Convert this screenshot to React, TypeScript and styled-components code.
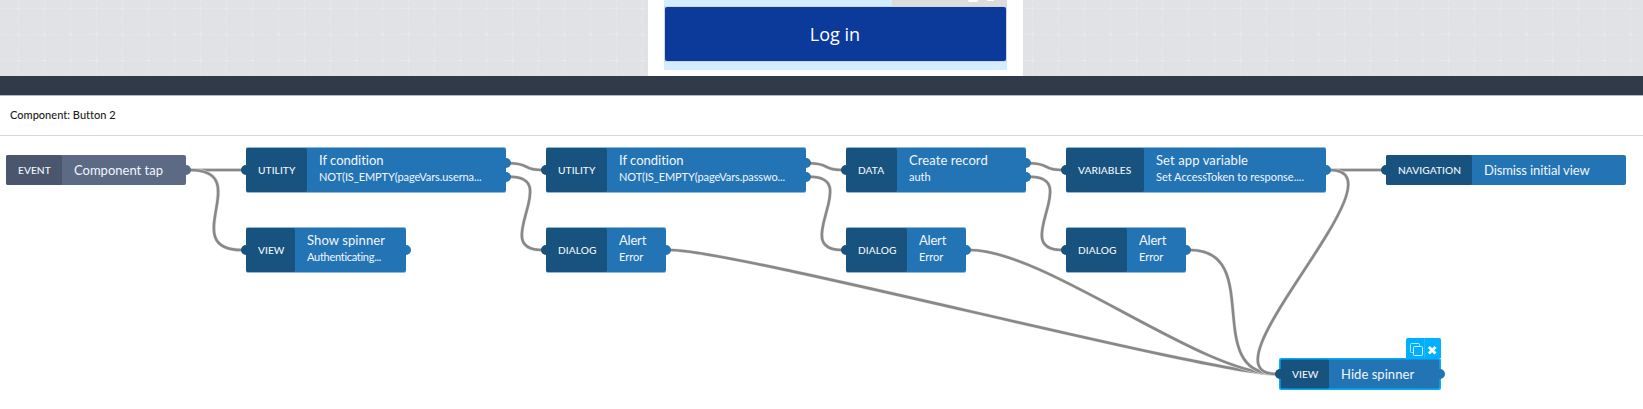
import React from 'react';
import styled, { createGlobalStyle } from 'styled-components';

const Global = createGlobalStyle`
  * { box-sizing: border-box; }
  body {
    margin: 0;
    background: #fff;
    font-family: Lato, "Liberation Sans", sans-serif;
    font-variant-ligatures: none;
  }
`;

const Page = styled.div`
  display: flex;
  flex-direction: column;
  width: 1643px;
  height: 409px;
  overflow: hidden;
`;

const Stage = styled.section`
  position: relative;
  display: flex;
  justify-content: center;
  flex: 0 0 76px;
  padding-left: 28px;
  background: #e0e2e6;
`;

const Grid = styled.svg`
  position: absolute;
  inset: 0;
`;

const Phone = styled.div`
  position: relative;
  display: flex;
  flex-direction: column;
  width: 375px;
  padding: 0 16px;
  background: #fff;
`;

const Hint = styled.div`
  display: flex;
  justify-content: flex-end;
  height: 6px;
  background: #d3edff;
`;

const HintLabel = styled.div`
  display: flex;
  gap: 9px;
  width: 115px;
  padding-left: 76px;
  background: #dcdcdc;
`;

const Descender = styled.span<{ $w: number; $h: number }>`
  width: ${p => p.$w}px;
  height: ${p => p.$h}px;
  border-radius: 0 0 3px 3px;
  background: #fff;
`;

const LoginFrame = styled.div`
  height: 56px;
  padding: 1px;
  background: #cfd6e0;
`;

const LoginButton = styled.button`
  display: block;
  width: 100%;
  height: 54px;
  padding: 0 1px 0 0;
  border: 0;
  border-radius: 2px;
  background: #0b3a9b;
  color: #fff;
  font: 18px/54px "Open Sans", sans-serif;
`;

const HintFoot = styled.div`
  height: 8px;
  background: #d3edff;
`;

const Divider = styled.div`
  flex: 0 0 20px;
  border-bottom: 1px solid #b7bbc2;
  background: #303a49;
`;

const Title = styled.header`
  flex: 0 0 40px;
  padding-left: 10px;
  border-bottom: 1px solid #d8d8d8;
  color: #1c1c1c;
  font: 500 11px/38px Lato, sans-serif;
  font-variant-ligatures: none;
  letter-spacing: 0.02px;
`;

const Canvas = styled.main`
  position: relative;
  flex: 1;
`;

const Wires = styled.svg`
  position: absolute;
  inset: 0;
`;

const NodeBox = styled.div<{ $x: number; $y: number; $w: number; $h: number; $event?: boolean; $tall?: boolean }>`
  position: absolute;
  left: ${p => p.$x}px;
  top: ${p => p.$y}px;
  width: ${p => p.$w}px;
  height: ${p => p.$h}px;
  display: flex;
  border-radius: 2px;
  background: ${p => (p.$event ? '#5c6a86' : '#2374b4')};
  color: #f2f6fb;
  box-shadow: ${p => (p.$tall ? '0 -1px 0 #8fb6d6, 0 1px 0 #8fb6d6' : 'none')};
`;

const Kind = styled.div<{ $w: number; $event?: boolean; $track: number }>`
  display: flex;
  align-items: center;
  flex: 0 0 ${p => p.$w}px;
  padding: 0 0 1px 12px;
  border-radius: 2px;
  background: ${p => (p.$event ? '#4a566d' : '#18527f')};
  font-size: 10.2px;
  font-weight: 500;
  letter-spacing: ${p => p.$track}px;
  white-space: nowrap;
`;

const Body = styled.div<{ $tall?: boolean }>`
  display: flex;
  flex-direction: column;
  justify-content: center;
  padding: 0 0 ${p => (p.$tall ? 4 : 0)}px 12px;
  white-space: nowrap;
`;

const Name = styled.div<{ $track: number }>`
  font-size: 13px;
  line-height: 17px;
  letter-spacing: ${p => p.$track}px;
`;

const Detail = styled.div<{ $track: number }>`
  font-size: 11px;
  line-height: 16px;
  letter-spacing: ${p => p.$track}px;
`;

const Selection = styled.div`
  position: absolute;
  inset: -1px;
  border-radius: 2px;
  box-shadow: inset 0 0 0 1.6px #00b0ff;
`;

const Port = styled.span<{ $side: 'in' | 'out'; $at: number; $color: string }>`
  position: absolute;
  ${p => (p.$side === 'in' ? 'left' : 'right')}: -5px;
  top: ${p => p.$at - 5}px;
  width: 10px;
  height: 10px;
  border-radius: 5px;
  background: ${p => p.$color};
`;

const Tools = styled.div`
  position: absolute;
  right: -1px;
  top: -21px;
  display: flex;
  width: 35px;
  height: 20px;
  border-radius: 2px 2px 0 0;
  background: #00b0ff;
`;

type NodeData = {
  kind: string; kw: number; name: string; detail?: string;
  x: number; y: number; w: number; event?: boolean; selected?: boolean;
  noIn?: boolean; outs: number[]; kt?: number; nt?: number; dt?: number;
};

/* y is the vertical middle of the node, relative to the canvas top */
const nodes: NodeData[] = [
  { kind: 'EVENT', kw: 56, name: 'Component tap', x: 6, y: 34, w: 180, event: true, noIn: true, outs: [0] },
  { kind: 'UTILITY', kw: 61, name: 'If condition', detail: 'NOT(IS_EMPTY(pageVars.userna...', x: 246, y: 34, w: 260, outs: [-6.7, 6.7], dt: -0.1 },
  { kind: 'VIEW', kw: 49, name: 'Show spinner', detail: 'Authenticating...', x: 246, y: 114, w: 160, outs: [0], nt: 0.1, dt: -0.28 },
  { kind: 'UTILITY', kw: 61, name: 'If condition', detail: 'NOT(IS_EMPTY(pageVars.passwo...', x: 546, y: 34, w: 260, outs: [-6.7, 6.7], dt: -0.1 },
  { kind: 'DIALOG', kw: 61, name: 'Alert', detail: 'Error', x: 546, y: 114, w: 120, outs: [0], nt: -0.2 },
  { kind: 'DATA', kw: 51, name: 'Create record', detail: 'auth', x: 846, y: 34, w: 180, outs: [-6.7, 6.7], nt: 0.08 },
  { kind: 'DIALOG', kw: 61, name: 'Alert', detail: 'Error', x: 846, y: 114, w: 120, outs: [0], nt: -0.2 },
  { kind: 'VARIABLES', kw: 78, name: 'Set app variable', detail: 'Set AccessToken to response....', x: 1066, y: 34, w: 260, outs: [0], nt: 0.1 },
  { kind: 'DIALOG', kw: 61, name: 'Alert', detail: 'Error', x: 1066, y: 114, w: 120, outs: [0], nt: -0.2 },
  { kind: 'NAVIGATION', kw: 86, name: 'Dismiss initial view', x: 1386, y: 34, w: 240, outs: [], nt: -0.1 },
  { kind: 'VIEW', kw: 49, name: 'Hide spinner', x: 1280, y: 238, w: 160, selected: true, outs: [0], nt: 0.05 },
];

/* x1, y1, x2, y2, horizontal reach of the control points */
const wires: number[][] = [
  [190, 34, 242, 34, 10],
  [190, 34, 242, 114, 66],
  [510, 27.3, 542, 34, 20],
  [510, 40.7, 542, 114, 53],
  [810, 27.3, 842, 34, 20],
  [810, 40.7, 842, 114, 53],
  [1030, 27.3, 1062, 34, 20],
  [1030, 40.7, 1062, 114, 53],
  [1330, 34, 1382, 34, 10],
  [670, 114, 1276, 238, 66],
  [970, 114, 1276, 238, 75],
  [1190, 114, 1276, 238, 75],
  [1330, 34, 1276, 238, 80],
];

const FlowNode = ({ n }: { n: NodeData }) => {
  const tall = !!n.detail;
  const h = tall ? 44 : 30;
  const dark = n.event ? '#4a566d' : '#18527f';
  const light = n.event ? '#5c6a86' : '#2374b4';
  return (
    <NodeBox $x={n.x} $y={n.y - h / 2} $w={n.w} $h={h} $event={n.event} $tall={tall}>
      <Kind $w={n.kw} $event={n.event} $track={n.kt ?? 0.05}>{n.kind}</Kind>
      <Body $tall={tall}>
        <Name $track={n.nt ?? 0}>{n.name}</Name>
        {n.detail && <Detail $track={n.dt ?? 0}>{n.detail}</Detail>}
      </Body>
      {n.selected && <Selection />}
      {!n.noIn && <Port $side="in" $at={h / 2} $color={dark} />}
      {n.outs.map(o => <Port key={o} $side="out" $at={h / 2 + o} $color={light} />)}
      {n.selected && (
        <Tools>
          <svg width="35" height="20" fill="none">
            <path d="M18.5 0v20" stroke="#20bbff" />
            <path d="M7 14.5H5.5a1 1 0 0 1-1-1v-7a1 1 0 0 1 1-1h7a1 1 0 0 1 1 1V8" stroke="#b5e8ff" />
            <rect x="7.5" y="8.5" width="9" height="9" rx="1" stroke="#d5f2ff" />
            <path d="M22.9 8.9l6.6 6.6M29.5 8.9l-6.6 6.6" stroke="#fff" strokeWidth="2.8" />
          </svg>
        </Tools>
      )}
    </NodeBox>
  );
};

export default function App() {
  return (
    <Page>
      <Global />
      <Stage>
        <Grid width="1643" height="76">
          <defs>
            <pattern id="grid" x="5" y="-5" width="26" height="26" patternUnits="userSpaceOnUse">
              <path d="M0 13.5H26M13.5 0V26" stroke="#e5e7ea" strokeDasharray="2.7 1.63" strokeDashoffset="-0.7" />
              <path d="M11.5 13.5h4M13.5 11.5v4" stroke="#e8eaed" />
            </pattern>
          </defs>
          <rect width="1643" height="76" fill="url(#grid)" />
        </Grid>
        <Phone>
          <Hint><HintLabel><Descender $w={10} $h={2} /><Descender $w={7} $h={1} /></HintLabel></Hint>
          <LoginFrame><LoginButton>Log in</LoginButton></LoginFrame>
          <HintFoot />
        </Phone>
      </Stage>
      <Divider />
      <Title>Component: Button 2</Title>
      <Canvas>
        <Wires width="1643" height="273" fill="none">
          {wires.map(([x1, y1, x2, y2, r], i) => {
            const d = `M${x1} ${y1}C${x1 + r} ${y1} ${x2 - r} ${y2} ${x2} ${y2}`;
            return (
              <g key={i}>
                <path d={d} stroke="#e4e4e0" strokeWidth="3.6" />
                <path d={d} stroke="#888" strokeWidth="2.6" />
              </g>
            );
          })}
        </Wires>
        {nodes.map((n, i) => <FlowNode key={i} n={n} />)}
      </Canvas>
    </Page>
  );
}
